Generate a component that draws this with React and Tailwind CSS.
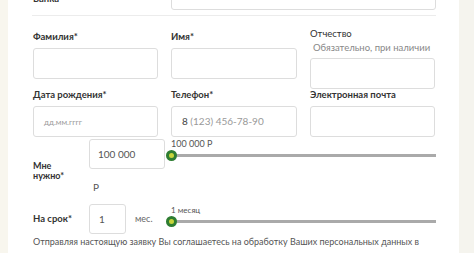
export default function App() {
  const font = "font-['Lato',sans-serif]";
  const label = "text-[9.5px] leading-[12px] font-bold text-[#333] whitespace-nowrap";
  const box = "h-[31px] border border-[#dddddd] rounded-[3px]";
  return (
    <div className={`w-[474px] h-[253px] overflow-hidden flex bg-white ${font}`}>
      <div className="w-[8px] shrink-0 bg-[#f8f6ee]" />
      <div className="w-[451px] shrink-0 pl-[25px]">
        <div className="w-[403px]">
          {/* top cropped row */}
          <div className="-mt-[20px] flex h-[30px]">
            <div className={`w-[138px] pt-[13px] ${label}`}>Банка</div>
            <div className="w-[265px] h-[30px] border border-[#dddddd] rounded-[3px]" />
          </div>
          <div className="mt-[5px] -ml-[1px] border-t border-[#ececec]" />
          {/* row 1 */}
          <div className="mt-[14px] grid grid-cols-[125px_126px_125px] gap-x-[13px] items-start">
            <div className="flex flex-col">
              <div className={`pt-[1px] ${label}`}>Фамилия*</div>
              <div className={`mt-[5px] ${box}`} />
            </div>
            <div className="flex flex-col">
              <div className={`pt-[1px] ${label}`}>Имя*</div>
              <div className={`mt-[5px] ${box}`} />
            </div>
            <div className="flex flex-col">
              <div className="-mt-[2px] text-[9.5px] leading-[12px] text-[#333]">Отчество</div>
              <div className="mt-[2px] pl-[3px] whitespace-nowrap text-[9.5px] leading-[12px] text-[#888]">Обязательно, при наличии</div>
              <div className={`mt-[4px] ${box}`} />
            </div>
          </div>
          {/* row 2 */}
          <div className="grid grid-cols-[125px_126px_125px] gap-x-[13px] items-start">
            <div className="flex flex-col">
              <div className={label}>Дата рождения*</div>
              <div className={`mt-[5px] ${box} flex items-center pl-[10px] text-[8px] text-[#999]`}>дд.мм.гггг</div>
            </div>
            <div className="flex flex-col">
              <div className={label}>Телефон*</div>
              <div className={`mt-[5px] ${box} flex items-center pl-[10px] text-[10px] text-[#999]`}>
                <span className="text-[#444]">8</span>&nbsp;(123) 456-78-90
              </div>
            </div>
            <div className="flex flex-col">
              <div className={label}>Электронная почта</div>
              <div className={`mt-[5px] ${box}`} />
            </div>
          </div>
          {/* row 3 */}
          <div className="mt-[2px] flex items-start">
            <div className="w-[56px] pt-[22px] text-[9px] leading-[10px] font-bold text-[#333]">
              <div>Мне</div>
              <div>нужно*</div>
            </div>
            <div className="flex flex-col w-[82px]">
              <div className="w-[76px] h-[30px] border border-[#dddddd] rounded-[3px] flex items-center pl-[8px] text-[10px] text-[#555]">100 000</div>
              <div className="mt-[12px] pl-[4px] text-[10px] leading-[12px] text-[#555]">Р</div>
            </div>
            <div className="flex-1 flex flex-col">
              <div className="text-[9px] leading-[10px] text-[#555]">100 000 Р</div>
              <Slider />
            </div>
          </div>
          {/* row 4 */}
          <div className="mt-[11px] flex items-start">
            <div className={`w-[56px] pt-[9px] ${label}`}>На срок*</div>
            <div className="w-[37px] h-[30px] border border-[#dddddd] rounded-[3px] flex items-center pl-[9px] text-[10px] text-[#555]">1</div>
            <div className="w-[45px] pl-[9px] pt-[9px] text-[9px] leading-[12px] text-[#666]">мес.</div>
            <div className="flex-1 flex flex-col pt-[1px]">
              <div className="text-[8px] leading-[10px] text-[#555]">1 месяц</div>
              <Slider />
            </div>
          </div>
          <div className="mt-[2px] whitespace-nowrap text-[9px] leading-[12px] text-[#555]">
            Отправляя настоящую заявку Вы соглашаетесь на обработку Ваших персональных данных в
          </div>
        </div>
      </div>
      <div className="flex-1 bg-[#f5f4ee]" />
    </div>
  );
}

function Slider() {
  return (
    <div className="relative h-[12px] flex items-center">
      <div className="w-full h-[3px] bg-[#aaaaaa]" />
      <div className="absolute -left-[5px] top-[1px] w-[11px] h-[11px] rounded-full bg-[#2e7d32] flex items-center justify-center">
        <div className="w-[5px] h-[5px] rounded-full bg-[#c6d43a]" />
      </div>
    </div>
  );
}
